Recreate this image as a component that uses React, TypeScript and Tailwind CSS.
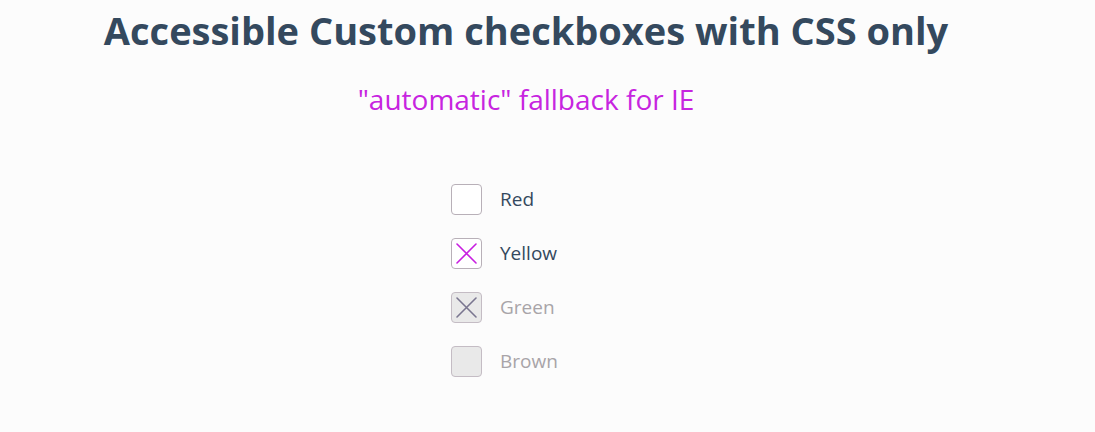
import React from 'react'

const ITEMS = [
  { label: 'Red', checked: false, disabled: false },
  { label: 'Yellow', checked: true, disabled: false },
  { label: 'Green', checked: true, disabled: true },
  { label: 'Brown', checked: false, disabled: true },
]

function Box({ checked, disabled }: { checked: boolean; disabled: boolean }) {
  return (
    <span
      className={`flex h-[31px] w-[31px] shrink-0 items-center justify-center rounded-[4px] border ${
        disabled ? 'border-[#c4bcc4] bg-[#e9e9e9]' : 'border-[#b8b0b8] bg-white'
      }`}
    >
      {checked && (
        <svg width="23" height="23" viewBox="0 0 23 23" fill="none">
          <path
            d="M2 2 L21 21 M21 2 L2 21"
            stroke={disabled ? '#7a7690' : '#c81fe0'}
            strokeWidth="1.6"
            strokeLinecap="round"
          />
        </svg>
      )}
    </span>
  )
}

export default function App() {
  return (
    <div className="min-h-[432px] bg-[#fcfcfc] font-['Open_Sans',sans-serif]">
      <div className="w-[1052px] text-center">
        <h1 className="pt-[4px] text-[38px] font-bold leading-[52px] text-[#34495e]">
          Accessible Custom checkboxes with CSS only
        </h1>
        <p className="mt-[24px] text-[28px] leading-[38px] text-[#c724e0]">
          "automatic" fallback for IE
        </p>
      </div>
      <ul className="ml-[451px] mt-[66px] flex flex-col gap-[23px]">
        {ITEMS.map((item) => (
          <li key={item.label} className="flex items-center gap-[18px]">
            <Box checked={item.checked} disabled={item.disabled} />
            <span
              className={`text-[19px] leading-[31px] ${
                item.disabled ? 'text-[#a8a4a8]' : 'text-[#34495e]'
              }`}
            >
              {item.label}
            </span>
          </li>
        ))}
      </ul>
    </div>
  )
}
